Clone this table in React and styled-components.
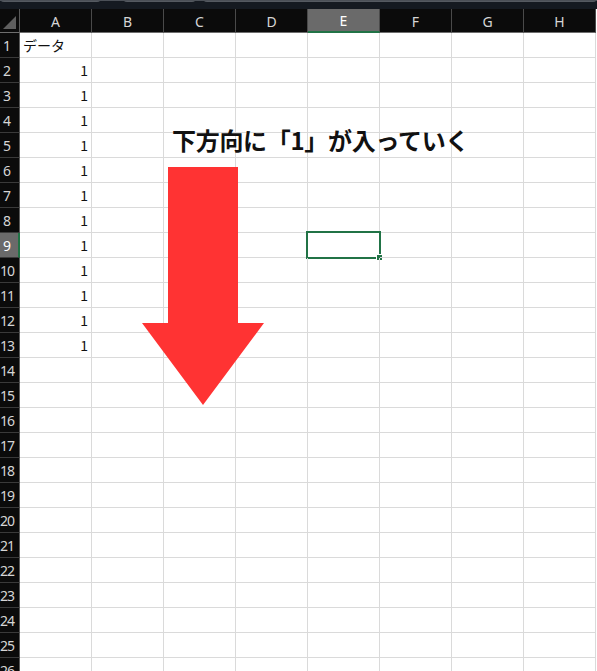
import React from "react";
import styled, { createGlobalStyle, css } from "styled-components";

const COLUMNS = ["A", "B", "C", "D", "E", "F", "G", "H"];
const ROWS = Array.from({ length: 26 }, (_, i) => i + 1);
const SELECTED_COL = "E";
const SELECTED_ROW = 9;

const cellValue = (row, col) => {
  if (col !== "A") return null;
  if (row === 1) return { text: "データ", align: "left" };
  if (row >= 2 && row <= 13) return { text: "1", align: "right" };
  return null;
};

const App = () => {
  return (
    <Page>
      <GlobalStyle />

      <TopStrip>
        <StripBox $width={100} />
        <StripBox $width={72} />
        <StripBox $width={397} />
      </TopStrip>

      <Sheet>
        <Corner>
          <CornerMark />
        </Corner>
        {COLUMNS.map((c) => (
          <ColHeader key={c} $selected={c === SELECTED_COL}>
            {c}
          </ColHeader>
        ))}

        {ROWS.map((r) => (
          <React.Fragment key={r}>
            <RowHeader $selected={r === SELECTED_ROW} $wide={r >= 10}>
              {r}
            </RowHeader>
            {COLUMNS.map((c) => {
              const v = cellValue(r, c);
              return (
                <Cell
                  key={c}
                  $align={v ? v.align : "left"}
                  $active={r === SELECTED_ROW && c === SELECTED_COL}
                >
                  {v && v.text}
                </Cell>
              );
            })}
          </React.Fragment>
        ))}
      </Sheet>

      {/* 注釈 */}
      <Note>下方向に「1」が入っていく</Note>
      <Arrow viewBox="0 0 124 240" width="124" height="240">
        <polygon
          points="26,0 96,0 96,156 122,156 61,238 0,156 26,156"
          fill="#ff3333"
        />
      </Arrow>
    </Page>
  );
};

export default App;

const GlobalStyle = createGlobalStyle`
  html, body {
    margin: 0;
    padding: 0;
    background: #ffffff;
    overflow: hidden;
  }
`;

const Page = styled.div`
  position: relative;
  width: 597px;
  height: 671px;
  overflow: hidden;
  background: #ffffff;
  font-family: "Noto Sans CJK JP", "Noto Sans", sans-serif;
`;

// 上の帯
const TopStrip = styled.div`
  display: flex;
  gap: 22px;
  height: 9px;
  background: #151a21;
  border-top: 1px solid #4b5057;
  box-sizing: border-box;
  overflow: hidden;
  & > *:nth-child(3) {
    margin-left: -15px;
  }
`;

const StripBox = styled.div`
  width: ${(p) => p.$width}px;
  height: 3px;
  margin-top: -3px;
  border: 1px solid #555a61;
  border-top: none;
  border-radius: 0 0 4px 4px;
  background: #1d2229;
`;

const Sheet = styled.div`
  display: grid;
  grid-template-columns: 20px repeat(8, 72px);
  grid-template-rows: 24px;
  grid-auto-rows: 25px;
`;

const headerText = css`
  font-family: "Noto Sans", "Liberation Sans", sans-serif;
  font-size: 14px;
  color: #d6d6d6;
  box-sizing: border-box;
`;

const Corner = styled.div`
  background: #0b0b0b;
  border-right: 1px solid #5a5a5a;
  border-bottom: 1px solid #6e6e6e;
  box-sizing: border-box;
  display: flex;
  align-items: flex-end;
  justify-content: flex-end;
  padding: 0 3px 3px 0;
`;

const CornerMark = styled.div`
  width: 13px;
  height: 13px;
  background: #5f5f5f;
  clip-path: polygon(100% 0, 100% 100%, 0 100%);
`;

const ColHeader = styled.div`
  ${headerText};
  background: ${(p) => (p.$selected ? "#6a6a6a" : "#0b0b0b")};
  color: ${(p) => (p.$selected ? "#ffffff" : "#d6d6d6")};
  border-right: 1px solid #4a4a4a;
  border-bottom: ${(p) =>
    p.$selected ? "2px solid #217346" : "1px solid #6e6e6e"};
  display: flex;
  align-items: center;
  justify-content: center;
  padding-top: 1px;
`;

const RowHeader = styled.div`
  ${headerText};
  background: ${(p) => (p.$selected ? "#6a6a6a" : "#0b0b0b")};
  color: ${(p) => (p.$selected ? "#ffffff" : "#d6d6d6")};
  border-right: ${(p) =>
    p.$selected ? "2px solid #217346" : "1px solid #5a5a5a"};
  border-bottom: 1px solid #3a3a3a;
  display: flex;
  align-items: center;
  justify-content: flex-start;
  padding-left: ${(p) => (p.$wide ? 0 : 3)}px;
  font-size: 14px;
  letter-spacing: ${(p) => (p.$wide ? "-1px" : "0")};
  white-space: nowrap;
  overflow: hidden;
`;

const Cell = styled.div`
  position: relative;
  box-sizing: border-box;
  border-right: 1px solid #dadada;
  border-bottom: 1px solid #dadada;
  font-size: 14px;
  color: #111111;
  display: flex;
  align-items: center;
  justify-content: ${(p) => (p.$align === "right" ? "flex-end" : "flex-start")};
  padding: 0 3px;
  white-space: nowrap;

  ${(p) =>
    p.$active &&
    css`
      &::before {
        content: "";
        position: absolute;
        left: -2px;
        top: -2px;
        right: -2px;
        bottom: -2px;
        border: 2px solid #217346;
      }
      &::after {
        content: "";
        position: absolute;
        right: -4px;
        bottom: -4px;
        width: 5px;
        height: 5px;
        background: #217346;
        border: 1px solid #ffffff;
      }
    `}
`;

const Note = styled.div`
  position: absolute;
  left: 172px;
  top: 122px;
  font-family: "Noto Sans CJK JP", sans-serif;
  font-size: 24px;
  font-weight: bold;
  color: #111111;
  white-space: nowrap;
  letter-spacing: -0.3px;
`;

const Arrow = styled.svg`
  position: absolute;
  left: 142px;
  top: 167px;
`;
